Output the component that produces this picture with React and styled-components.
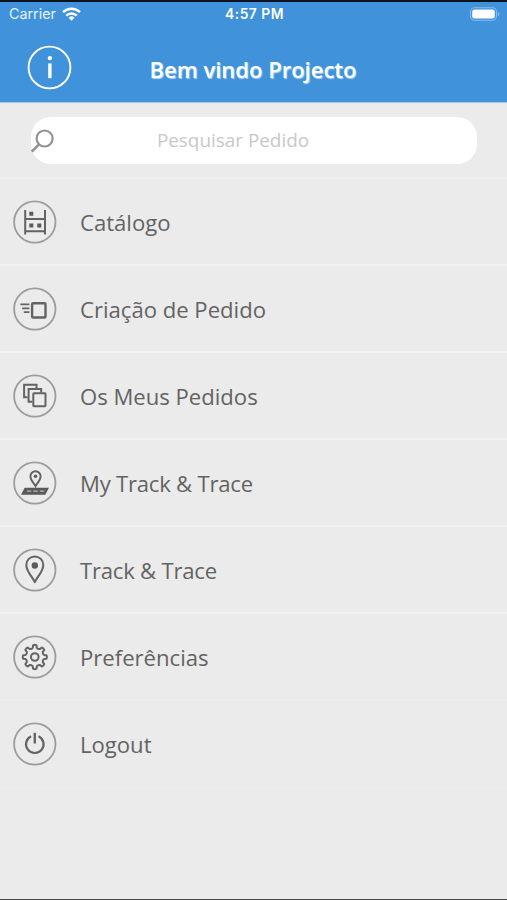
import React, { useState } from 'react';
import styled, { createGlobalStyle } from 'styled-components';

const GlobalStyle = createGlobalStyle`
  * {
    box-sizing: border-box;
  }
  body {
    margin: 0;
    background: #ebebeb;
    font-family: 'Open Sans', 'Noto Sans', sans-serif;
  }
`

const Screen = styled.div`
  display: flex;
  flex-direction: column;
  height: 900px;
  overflow: hidden;
  background: #ebebeb;
  border-top: 2px solid #07131f;
  border-bottom: 1px solid #444444;
`

const Header = styled.header`
  height: 101px;
  flex-shrink: 0;
  background: #4092da;
  color: white;
  border-bottom: 1px solid #9fc5e8;
`

const StatusBar = styled.div`
  display: grid;
  grid-template-columns: 1fr auto 1fr;
  align-items: center;
  height: 23px;
  padding: 0 7px 0 9px;
  font-family: Inter, 'Liberation Sans', sans-serif;
  font-size: 13.8px;
`

const Carrier = styled.div`
  display: flex;
  align-items: center;
  gap: 6px;
  font-size: 14.3px;
  color: #e6f3ff;
`

const Time = styled.div`
  font-weight: 600;
  letter-spacing: 0.5px;
`

const Battery = styled.svg`
  justify-self: end;
`

const TitleBar = styled.div`
  display: grid;
  grid-template-columns: 72px 1fr 73px;
  align-items: center;
  height: 77px;
  padding-top: 10px;
`

const InfoButton = styled.button`
  display: flex;
  padding: 0;
  margin-left: 27px;
  margin-top: -2px;
  border: none;
  background: none;
  color: white;
`

const Title = styled.h1`
  margin: 0;
  text-align: center;
  font-size: 22px;
  font-weight: 600;
  line-height: 30px;
  text-shadow: 1px 1px 1px rgba(255, 255, 255, 0.6);
`

const SearchArea = styled.div`
  height: 76px;
  flex-shrink: 0;
  padding: 14px 30px 0 31px;
  border-bottom: 2px solid #eeeeee;
`

const SearchBox = styled.label`
  display: flex;
  align-items: center;
  height: 47px;
  border-radius: 20px;
  background: white;
`

const SearchInput = styled.input`
  flex: 1;
  min-width: 0;
  height: 40px;
  padding: 0 66px 1px 0;
  border: none;
  outline: none;
  background: transparent;
  text-align: center;
  font-family: inherit;
  font-size: 18.9px;
  color: #5f5f5f;
  &::placeholder {
    color: #c8c8c8;
    opacity: 1;
  }
`

const Menu = styled.ul`
  margin: 0;
  padding: 0;
  list-style: none;
`

const MenuItem = styled.li`
  display: flex;
  align-items: center;
  gap: 23px;
  height: 87px;
  padding: 0 13px;
  border-bottom: 2px solid ${props => props.$soft ? '#ededed' : '#f2f2f2'};
  font-size: 22.1px;
  color: #636363;
`

const Label = styled.span`
  line-height: 30px;
  letter-spacing: ${props => props.$tight ? '-0.22px' : 'normal'};
`

const RoundIcon = styled.svg`
  flex-shrink: 0;
  fill: none;
  stroke: #636363;
  stroke-width: 2;
`

// 8 rounded teeth around the centre of the icon
const gearPath = () => {
  const punto = (grados, r) => {
    const rad = grados * Math.PI / 180;
    return (22 + r * Math.cos(rad)).toFixed(2) + ' ' + (22 + r * Math.sin(rad)).toFixed(2);
  }
  let d = 'M' + punto(-102, 9.5);
  for (let i = 0; i < 8; i++) {
    const a = i * 45 - 90;
    d += 'L' + punto(a - 8.5, 11.8);
    d += 'Q' + punto(a, 12.6) + ' ' + punto(a + 8.5, 11.8);
    d += 'L' + punto(a + 12, 9.5);
    d += 'Q' + punto(a + 22.5, 8.2) + ' ' + punto(a + 33, 9.5);
  }
  return d + 'Z';
}

const icons = {
  catalogo: (
    <>
      <path d="M12.4 10v24.5M32.2 10v24.5M12.4 19h19.8M12.4 31.2h19.8" />
      <path d="M16.5 11.8h4v4h-4zM16.5 23.5h4v4h-4zM24.5 23.5h4v4h-4z" fill="#5a5a5a" stroke="none" />
    </>
  ),
  criacao: (
    <>
      <rect x="19.3" y="16.3" width="13.4" height="14.2" rx="1" strokeWidth="2.4" />
      <path d="M7.6 17.4h9M9.3 21.3h7.3M11 25.2h5.6" strokeWidth="1.7" />
    </>
  ),
  pedidos: (
    <>
      <path d="M14.8 23.2h-3.5v-12.4h12.4v3.6" />
      <path d="M19.3 27.7h-3.5v-12.7h12.6v3.6" />
      <rect x="20.5" y="19.2" width="12.2" height="13" rx="0.6" />
    </>
  ),
  myTrack: (
    <>
      <path d="M22.7 25.2c-1.4-3-5.1-5.6-5.1-9.8a5.1 5.1 0 0 1 10.2 0c0 4.2-3.7 6.8-5.1 9.8z" strokeWidth="1.9" />
      <circle cx="22.7" cy="15.2" r="1.7" fill="#5a5a5a" stroke="none" />
      <path d="M11.9 26.7h24.3l-3.7 7h-24.3z" fill="#5a5a5a" stroke="none" />
      <path d="M14 30.1h4.5M20.5 30.1h4.5M27 30.1h4.5" stroke="#b8b8b8" strokeWidth="1.1" />
    </>
  ),
  track: (
    <>
      <path d="M22 34.2c-1.9-4.8-8.5-10.6-8.5-17.3a8.5 8.5 0 0 1 17 0c0 6.7-6.6 12.5-8.5 17.3z" strokeLinejoin="round" />
      <circle cx="22" cy="17.5" r="3.2" fill="#5a5a5a" stroke="none" />
    </>
  ),
  preferencias: (
    <>
      <path d={gearPath()} strokeLinejoin="round" />
      <circle cx="22" cy="22" r="3.8" />
    </>
  ),
  logout: (
    <>
      <path d="M18.3 14.2a8.8 8.8 0 1 0 7.4 0" strokeWidth="2.2" />
      <path d="M22 10.8v10.7" strokeWidth="2.4" />
    </>
  )
}

const opciones = [
  { id: 'catalogo', texto: 'Catálogo' },
  { id: 'criacao', texto: 'Criação de Pedido' },
  { id: 'pedidos', texto: 'Os Meus Pedidos' },
  { id: 'myTrack', texto: 'My Track & Trace', tight: true },
  { id: 'track', texto: 'Track & Trace', tight: true },
  { id: 'preferencias', texto: 'Preferências', soft: true },
  { id: 'logout', texto: 'Logout', soft: true }
]

function App() {

  const [pedido, setPedido] = useState('');

  return (
    <Screen>
      <GlobalStyle />
      <Header>
        <StatusBar>
          <Carrier>
            Carrier
            <svg width="19" height="14" viewBox="0 0 19 14" fill="none" stroke="white" strokeWidth="2.5">
              <path d="M1 5.2a12.2 12.2 0 0 1 17 0" />
              <path d="M4.2 8.6a7.6 7.6 0 0 1 10.6 0" />
              <path d="M9.5 13.7l-2.9-3a4.2 4.2 0 0 1 5.8 0z" fill="white" stroke="none" />
            </svg>
          </Carrier>
          <Time>4:57 PM</Time>
          <Battery width="31" height="14" viewBox="0 0 31 14">
            <rect x="1.5" y="0.7" width="26" height="12.6" rx="4" fill="none" stroke="#8abcec" strokeWidth="1.1" />
            <rect x="3.2" y="2.4" width="22.6" height="9.2" rx="2.4" fill="white" />
            <path d="M29 4.8c2 .8 2 3.6 0 4.4z" fill="#8abcec" />
          </Battery>
        </StatusBar>
        <TitleBar>
          <InfoButton aria-label="Info">
            <svg width="45" height="45" viewBox="0 0 45 45" fill="none" stroke="white">
              <circle cx="22.5" cy="22.5" r="20.9" strokeWidth="1.9" />
              <path d="M22.9 18.4v14.8" strokeWidth="3.4" />
              <circle cx="22.9" cy="13.1" r="2.2" fill="white" stroke="none" />
            </svg>
          </InfoButton>
          <Title>Bem vindo Projecto</Title>
        </TitleBar>
      </Header>

      <SearchArea>
        <SearchBox>
          <svg width="24" height="26" viewBox="0 0 24 26" fill="none" stroke="#929292" strokeWidth="2.2">
            <circle cx="13.6" cy="10.5" r="8" />
            <path d="M8 16.3l-7.2 7.2" strokeWidth="2.5" />
          </svg>
          <SearchInput
            placeholder="Pesquisar Pedido"
            value={pedido}
            onChange={(event) => setPedido(event.target.value)}
          />
        </SearchBox>
      </SearchArea>

      <Menu>
        {opciones.map(op => (
          <MenuItem key={op.id} $soft={op.soft}>
            <RoundIcon width="44" height="44" viewBox="0.2 0 44 44">
              <circle cx="22" cy="22" r="20.7" stroke="#9c9c9c" strokeWidth="1.8" />
              {icons[op.id]}
            </RoundIcon>
            <Label $tight={op.tight}>{op.texto}</Label>
          </MenuItem>
        ))}
      </Menu>
    </Screen>
  );
}

export default App;
